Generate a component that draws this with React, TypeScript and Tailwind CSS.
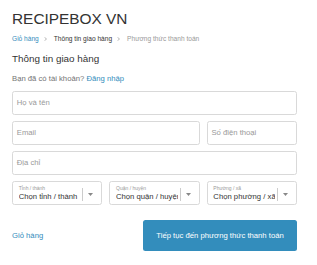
import { ReactNode } from "react";

const font = { fontFamily: '"Liberation Sans", Arial, "Noto Sans CJK SC", sans-serif' };

function Chevron() {
  return (
    <svg width="3" height="4" viewBox="0 0 3 4" className="ml-[5px] mr-[7px] shrink-0">
      <path d="M0.5 0.3L2.5 2L0.5 3.7" fill="none" stroke="#999" strokeWidth="0.7" />
    </svg>
  );
}

function Field({ placeholder, className = "" }: { placeholder: string; className?: string }) {
  return (
    <div
      className={`h-[24px] border border-[#d9d9d9] rounded-[2.5px] bg-white flex items-center pl-[3.8px] text-[7.7px] text-[#999] ${className}`}
    >
      {placeholder}
    </div>
  );
}

function SelectBox({ label, value }: { label: string; value: ReactNode }) {
  return (
    <div className="relative h-[24px] border border-[#d9d9d9] rounded-[2.5px] bg-white">
      <div className="pl-[5.7px] pr-[21px] pt-[3.3px] overflow-hidden whitespace-nowrap">
        <div className="text-[5px] leading-[6px] text-[#999]">{label}</div>
        <div className="mt-[1px] text-[7.7px] leading-[9px] text-[#333] overflow-hidden">{value}</div>
      </div>
      <div className="absolute right-[18px] top-[6px] bottom-[3px] w-px bg-[#ccc]" />
      <svg width="5" height="3" viewBox="0 0 5 3" className="absolute right-[8px] top-[11px]">
        <path d="M0 0H5L2.5 3Z" fill="#888" />
      </svg>
    </div>
  );
}

export default function App() {
  return (
    <main className="min-h-screen bg-white" style={font}>
      <div className="w-[285px] ml-[12px] pt-[10px]">
        <h1 className="text-[15.4px] leading-[18px] text-[#333]">RECIPEBOX VN</h1>

        {/* breadcrumb */}
        <nav className="mt-[6px] flex items-center text-[6.6px] leading-[10px]">
          <span className="text-[#338dbc]">Giỏ hàng</span>
          <Chevron />
          <span className="text-[#333]">Thông tin giao hàng</span>
          <Chevron />
          <span className="text-[#999]">Phương thức thanh toán</span>
        </nav>

        <h2 className="mt-[8.5px] text-[9.9px] leading-[12px] text-[#333]">Thông tin giao hàng</h2>

        <p className="mt-[9.2px] text-[7.7px] leading-[10px] text-[#737373]">
          Bạn đã có tài khoản? <span className="text-[#338dbc]">Đăng nhập</span>
        </p>

        <div className="mt-[7.5px] grid grid-cols-3 gap-x-[7px] gap-y-[6px]">
          <Field placeholder="Họ và tên" className="col-span-3" />
          <Field placeholder="Email" className="col-span-2" />
          <Field placeholder="Số điện thoại" />
          <Field placeholder="Địa chỉ" className="col-span-3" />
          <SelectBox label="Tỉnh / thành" value="Chọn tỉnh / thành" />
          <SelectBox label="Quận / huyện" value="Chọn quận / huyện" />
          <SelectBox label="Phường / xã" value="Chọn phường / xã" />
        </div>

        <div className="mt-[15px] flex items-center justify-between">
          <span className="text-[7.7px] text-[#338dbc]">Giỏ hàng</span>
          <button className="h-[31px] w-[154px] rounded-[2.5px] bg-[#338dbc] text-white text-[7.7px]">
            Tiếp tục đến phương thức thanh toán
          </button>
        </div>
      </div>
    </main>
  );
}
